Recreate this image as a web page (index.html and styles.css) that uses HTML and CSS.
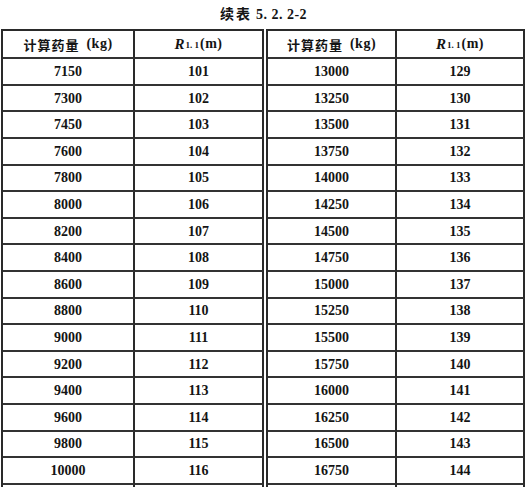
FILE: index.html
```html
<!DOCTYPE html>
<html lang="zh">
<head>
<meta charset="utf-8">
<title>续表 5.2.2-2</title>
<link rel="stylesheet" href="styles.css">
</head>
<body>
<div class="page">
  <div class="title"><span class="cjk">续表</span> <span class="num">5. 2. 2-2</span></div>
  <div class="tables">
    <div class="grid left">
      <div class="cell head"><span class="cjk">计算药量</span><span class="unit">(kg)</span></div>
      <div class="cell head"><span class="r">R</span><span class="sub">1. 1</span><span class="unit2">(m)</span></div>
      <div class="cell">7150</div><div class="cell">101</div>
      <div class="cell">7300</div><div class="cell">102</div>
      <div class="cell">7450</div><div class="cell">103</div>
      <div class="cell">7600</div><div class="cell">104</div>
      <div class="cell">7800</div><div class="cell">105</div>
      <div class="cell">8000</div><div class="cell">106</div>
      <div class="cell">8200</div><div class="cell">107</div>
      <div class="cell">8400</div><div class="cell">108</div>
      <div class="cell">8600</div><div class="cell">109</div>
      <div class="cell">8800</div><div class="cell">110</div>
      <div class="cell">9000</div><div class="cell">111</div>
      <div class="cell">9200</div><div class="cell">112</div>
      <div class="cell">9400</div><div class="cell">113</div>
      <div class="cell">9600</div><div class="cell">114</div>
      <div class="cell">9800</div><div class="cell">115</div>
      <div class="cell">10000</div><div class="cell">116</div>
      <div class="cell"></div><div class="cell"></div>
    </div>
    <div class="grid right">
      <div class="cell head"><span class="cjk">计算药量</span><span class="unit">(kg)</span></div>
      <div class="cell head"><span class="r">R</span><span class="sub">1. 1</span><span class="unit2">(m)</span></div>
      <div class="cell">13000</div><div class="cell">129</div>
      <div class="cell">13250</div><div class="cell">130</div>
      <div class="cell">13500</div><div class="cell">131</div>
      <div class="cell">13750</div><div class="cell">132</div>
      <div class="cell">14000</div><div class="cell">133</div>
      <div class="cell">14250</div><div class="cell">134</div>
      <div class="cell">14500</div><div class="cell">135</div>
      <div class="cell">14750</div><div class="cell">136</div>
      <div class="cell">15000</div><div class="cell">137</div>
      <div class="cell">15250</div><div class="cell">138</div>
      <div class="cell">15500</div><div class="cell">139</div>
      <div class="cell">15750</div><div class="cell">140</div>
      <div class="cell">16000</div><div class="cell">141</div>
      <div class="cell">16250</div><div class="cell">142</div>
      <div class="cell">16500</div><div class="cell">143</div>
      <div class="cell">16750</div><div class="cell">144</div>
      <div class="cell"></div><div class="cell"></div>
    </div>
  </div>
</div>
</body>
</html>
```

FILE: styles.css
```css
html, body {
  margin: 0;
  padding: 0;
  background: #fff;
  overflow: hidden;
}

.page {
  width: 525px;
  color: #141414;
  font-family: "Liberation Serif", "Noto Sans CJK SC", serif;
  font-weight: bold;
}

.title {
  height: 29px;
  box-sizing: border-box;
  padding-top: 4px;
  padding-left: 2px;
  text-align: center;
  font-size: 14px;
  line-height: 18px;
  letter-spacing: 0.5px;
}

.cjk {
  font-family: "Noto Sans CJK SC", sans-serif;
  font-weight: bold;
  letter-spacing: 1px;
}

.title .cjk {
  letter-spacing: 2px;
}

.tables {
  display: flex;
  gap: 2px;
  margin-left: 1px;
}

.grid {
  display: grid;
  grid-template-rows: 28.3px;
  grid-auto-rows: 26.6px;
  border-left: 2px solid #2a2a2a;
  border-top: 2px solid #2a2a2a;
}

.left {
  grid-template-columns: 132px 129px;
}

.right {
  grid-template-columns: 129px 128px;
}

.cell {
  display: flex;
  align-items: center;
  justify-content: center;
  border-right: 2px solid #2a2a2a;
  border-bottom: 2px solid #333;
  font-size: 14px;
  padding-top: 1px;
}

.head {
  font-size: 13px;
  padding-top: 0;
}

.head .cjk {
  font-size: 13px;
}

.unit {
  margin-left: 7px;
  font-size: 14px;
  letter-spacing: 0.5px;
}

.r {
  font-style: italic;
  font-size: 15px;
}

.sub {
  font-size: 9px;
  align-self: flex-end;
  margin-bottom: 7px;
  margin-left: 1px;
}

.unit2 {
  font-size: 14px;
  margin-left: 1px;
  letter-spacing: 0.5px;
}
```
